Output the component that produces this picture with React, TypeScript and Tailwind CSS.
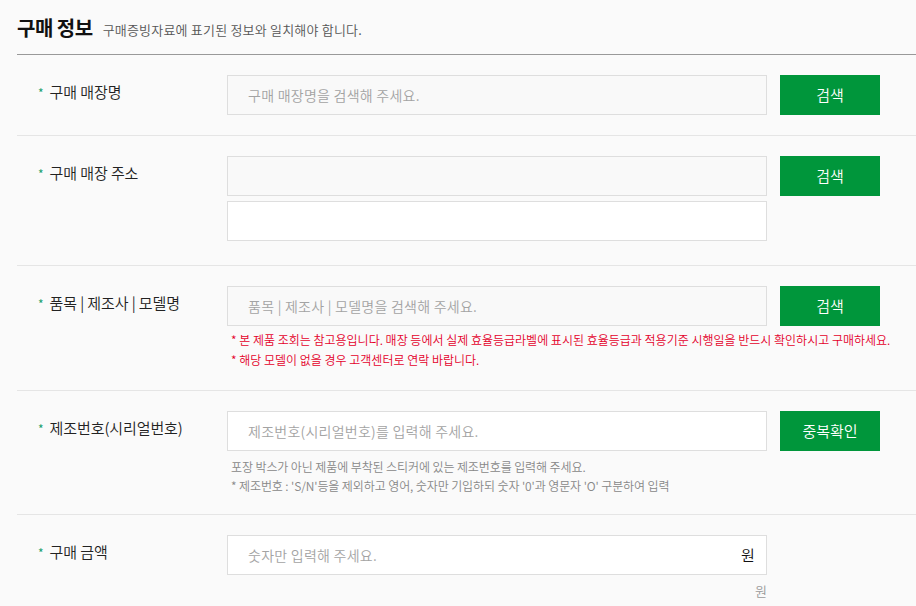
import React from "react";

const font = { fontFamily: '"Noto Sans CJK KR", "Noto Sans", sans-serif' };

function Label({ text }: { text: string }) {
  return (
    <div className="w-[210px] shrink-0 pl-[21px] pt-[7px] flex items-start">
      <span className="text-[#1a9f6e] text-[12px] leading-[20px] mr-[6px] mt-[1px]">*</span>
      <span className="text-[15px] leading-[20px] text-[#222] tracking-[-0.1px] font-[350]">{text}</span>
    </div>
  );
}

function Input({ placeholder, white }: { placeholder?: string; white?: boolean }) {
  return (
    <div
      className={`w-[540px] h-[40px] border border-[#dedede] flex items-center pl-[20px] text-[14px] text-[#a3a3a3] tracking-[0.25px] font-[350] ${
        white ? "bg-white" : "bg-[#f9f9f9]"
      }`}
    >
      {placeholder}
    </div>
  );
}

function Btn({ text }: { text: string }) {
  return (
    <div className="ml-[13px] w-[100px] h-[40px] bg-[#00963b] text-white text-[15px] flex items-center justify-center tracking-[0px] font-[350]">
      {text}
    </div>
  );
}

export default function App() {
  return (
    <div className="w-[916px] h-[606px] overflow-hidden bg-[#fafafa] pl-[17px]" style={font}>
      <div className="h-[55px] flex items-end pb-[14px] border-b border-[#999]">
        <span className="text-[20px] font-bold text-[#111] tracking-[-0.5px] leading-[24px]">구매 정보</span>
        <span className="ml-[10px] text-[13px] text-[#555] tracking-[0.2px] leading-[20px] font-[350]">
          구매증빙자료에 표기된 정보와 일치해야 합니다.
        </span>
      </div>

      {/* row 1 */}
      <div className="flex pt-[20px] pb-[20px] border-b border-[#e5e5e5]">
        <Label text="구매 매장명" />
        <Input placeholder="구매 매장명을 검색해 주세요." />
        <Btn text="검색" />
      </div>

      {/* row 2 */}
      <div className="flex pt-[20px] pb-[24px] border-b border-[#e5e5e5]">
        <Label text="구매 매장 주소" />
        <div className="flex flex-col gap-[5px]">
          <Input />
          <Input white />
        </div>
        <Btn text="검색" />
      </div>

      {/* row 3 */}
      <div className="flex pt-[20px] pb-[20px] border-b border-[#e5e5e5]">
        <Label text="품목 | 제조사 | 모델명" />
        <div className="flex flex-col">
          <div className="flex">
            <Input placeholder="품목 | 제조사 | 모델명을 검색해 주세요." />
            <Btn text="검색" />
          </div>
          <div className="mt-[4px] pl-[4px] text-[12px] leading-[20px] text-[#e4002b] tracking-[0px] whitespace-nowrap font-[350]">
            <div>* 본 제품 조회는 참고용입니다. 매장 등에서 실제 효율등급라벨에 표시된 효율등급과 적용기준 시행일을 반드시 확인하시고 구매하세요.</div>
            <div>* 해당 모델이 없을 경우 고객센터로 연락 바랍니다.</div>
          </div>
        </div>
      </div>

      {/* row 4 */}
      <div className="flex pt-[20px] pb-[19px] border-b border-[#e5e5e5]">
        <Label text="제조번호(시리얼번호)" />
        <div className="flex flex-col">
          <div className="flex">
            <Input white placeholder="제조번호(시리얼번호)를 입력해 주세요." />
            <Btn text="중복확인" />
          </div>
          <div className="mt-[6px] pl-[4px] text-[12px] leading-[19px] text-[#888] tracking-[-0.1px] whitespace-nowrap font-[350]">
            <div>포장 박스가 아닌 제품에 부착된 스티커에 있는 제조번호를 입력해 주세요.</div>
            <div>* 제조번호 : 'S/N'등을 제외하고 영어, 숫자만 기입하되 숫자 '0'과 영문자 'O' 구분하여 입력</div>
          </div>
        </div>
      </div>

      {/* row 5 */}
      <div className="flex pt-[20px]">
        <Label text="구매 금액" />
        <div className="flex flex-col">
          <div className="w-[540px] h-[40px] border border-[#dedede] bg-white flex items-center justify-between pl-[20px] pr-[11px] text-[14px] tracking-[0.25px] font-[350]">
            <span className="text-[#a3a3a3]">숫자만 입력해 주세요.</span>
            <span className="text-[#111] text-[15px]">원</span>
          </div>
          <div className="mt-[6px] text-right text-[13px] text-[#999] leading-[20px] font-[350]">원</div>
        </div>
      </div>
    </div>
  );
}
